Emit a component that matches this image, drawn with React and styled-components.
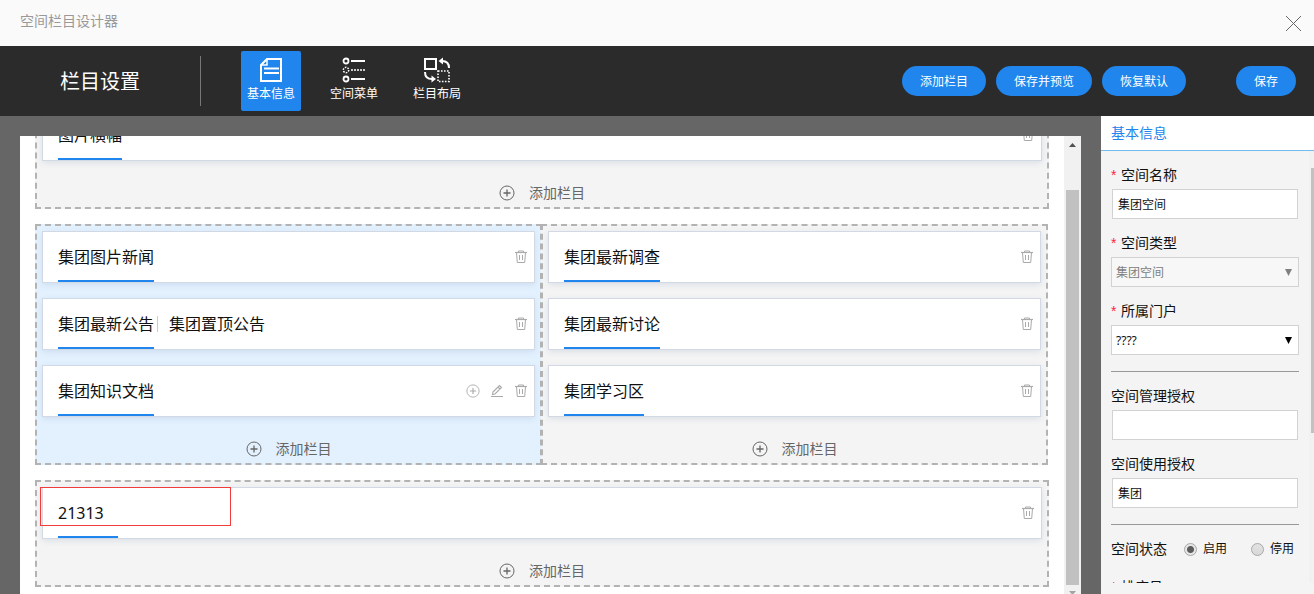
import React, { useState } from 'react';
import styled, { createGlobalStyle, css } from 'styled-components';

const GlobalStyle = createGlobalStyle`
  *, *::before, *::after {
    box-sizing: border-box;
  }
  body {
    margin: 0;
    overflow: hidden;
    color: #111;
    font-family: "Noto Sans", "Noto Sans CJK SC", sans-serif;
    font-size: 14px;
  }
  button, input, select {
    font-family: inherit;
  }
`;

const Page = styled.div`
  display: flex;
  flex-direction: column;
  height: 100vh;
`;

const TitleBar = styled.div`
  display: flex;
  flex: none;
  align-items: center;
  justify-content: space-between;
  height: 46px;
  padding: 0 12px 0 20px;
  background: #fafafa;
  color: #999;
  line-height: 20px;
`;

const TitleText = styled.span`
  padding-bottom: 4px;
`;

const IconButton = styled.button`
  display: flex;
  padding: 0;
  border: 0;
  background: none;
  color: inherit;
  cursor: pointer;
`;

const Header = styled.header`
  display: flex;
  flex: none;
  align-items: center;
  height: 70px;
  padding: 0 18px 0 60px;
  background: #2b2b2b;
  color: #fff;
`;

const HeaderTitle = styled.h1`
  margin: 0;
  padding: 2px 60px 0 0;
  font-size: 20px;
  font-weight: 400;
  line-height: 48px;
  border-right: 1px solid #777;
`;

const Nav = styled.nav`
  display: flex;
  flex: 1;
  gap: 23px;
  margin-left: 40px;
`;

const NavButton = styled.button`
  display: flex;
  flex-direction: column;
  align-items: center;
  width: 60px;
  height: 60px;
  padding: 6px 0 0;
  border: 0;
  border-radius: 2px;
  background: none;
  color: #fff;
  font-size: 12px;
  line-height: 22px;
  white-space: nowrap;
  cursor: pointer;
  ${props => props.$active && css`
    background: #2085ec;
  `}
`;

const Actions = styled.div`
  display: flex;
  gap: 10px;
`;

const ActionButton = styled.button`
  height: 30px;
  padding: 0 18px;
  border: 0;
  border-radius: 15px;
  background: #2085ec;
  color: #fff;
  font-size: 12px;
  cursor: pointer;
`;

const SaveButton = styled(ActionButton)`
  margin-left: 50px;
`;

const Body = styled.div`
  display: flex;
  flex: 1;
  min-height: 0;
  background: #666;
`;

const Canvas = styled.main`
  display: flex;
  flex: 1;
  min-width: 0;
  margin: 20px 20px 0;
  background: #fff;
`;

const Viewport = styled.div`
  flex: 1;
  overflow: hidden;
`;

const Sections = styled.div`
  display: flex;
  flex-direction: column;
  gap: 15px;
  margin-top: -34px;
  padding: 0 15px;
`;

const Columns = styled.div`
  display: flex;
  padding-right: 1px;
  > :last-child {
    margin-left: -1px;
  }
`;

const Section = styled.section`
  position: relative;
  flex: 1;
  padding: 5px 5px 0;
  border: 2px dashed #b3b3b3;
  background: ${props => (props.$active ? '#e3f1fe' : '#f4f4f4')};
`;

const Card = styled.div`
  display: flex;
  align-items: center;
  height: 52px;
  margin-bottom: 15px;
  padding: 0 6px 0 15px;
  border: 1px solid #d3d8e5;
  background: #fff;
  box-shadow: 0 2px 6px rgba(60, 90, 140, 0.12);
`;

const CardTitles = styled.div`
  display: flex;
  flex: 1;
`;

const CardTitle = styled.div`
  display: flex;
  align-items: center;
  min-width: 60px;
  height: 50px;
  padding-top: 2px;
  border-bottom: 2px solid ${props => (props.$active ? '#2085ec' : 'transparent')};
  font-size: 16px;
  line-height: 16px;
  &:not(:first-child)::before {
    content: "";
    width: 1px;
    height: 16px;
    margin: 0 11px 0 3px;
    background: #ccc;
  }
`;

const CardTools = styled.div`
  display: flex;
  gap: 10px;
  color: #aaa;
`;

const AddButton = styled.button`
  display: flex;
  align-items: center;
  justify-content: center;
  gap: 14px;
  width: 100%;
  height: 31px;
  padding: 2px 0 0;
  border: 0;
  background: none;
  color: #666;
  font-size: 14px;
  line-height: 20px;
  cursor: pointer;
`;

const Marker = styled.div`
  position: absolute;
  top: 5px;
  left: 3px;
  width: 191px;
  height: 39px;
  border: 1px solid #f23c3c;
`;

const ScrollBar = styled.div`
  display: flex;
  flex-direction: column;
  width: 17px;
  background: #f1f1f1;
`;

const ScrollArrow = styled.div`
  display: flex;
  flex: none;
  justify-content: center;
  height: ${props => (props.$down ? 9 : 17)}px;
  padding-top: ${props => (props.$down ? 6 : 7)}px;
  color: ${props => (props.$down ? '#a3a3a3' : '#505050')};
  overflow: hidden;
`;

const ScrollThumb = styled.div`
  flex: 1;
  margin: 37px 2px 0;
  background: #c1c1c1;
`;

const Sidebar = styled.aside`
  display: flex;
  flex: none;
  flex-direction: column;
  width: 213px;
  padding-bottom: 11px;
  background: #f4f4f4;
`;

const SidebarTitle = styled.h2`
  flex: none;
  margin: 0;
  padding-left: 10px;
  border-bottom: 1px solid #70bbf2;
  background: #fff;
  color: #2085ec;
  font-size: 14px;
  font-weight: 400;
  line-height: 34px;
`;

const SidebarBody = styled.div`
  display: flex;
  flex: 1;
  min-height: 0;
  overflow: hidden;
`;

const SidebarScroll = styled.div`
  width: 5px;
  padding: 17px 0 0 2px;
  background: #f1f1f1;
`;

const SidebarThumb = styled.div`
  height: 265px;
  background: #c1c1c1;
`;

const Form = styled.form`
  flex: 1;
  min-width: 0;
  padding: 14px 10px 0;
`;

const Field = styled.div`
  margin-bottom: 14px;
`;

const Label = styled.label`
  display: flex;
  margin-bottom: 4px;
  line-height: 20px;
`;

const Required = styled.span`
  width: 10px;
  color: #ff1f3d;
  font-family: "Liberation Sans", sans-serif;
`;

const TextInput = styled.input`
  display: block;
  width: calc(100% - 2px);
  height: 30px;
  margin: 0 1px;
  padding: 0 5px;
  border: 1px solid #d2d2d2;
  background: #fff;
  color: #111;
  font-size: 12px;
`;

const SelectBox = styled.div`
  position: relative;
  svg {
    position: absolute;
    top: 12px;
    right: 7px;
    color: ${props => (props.$disabled ? '#808080' : '#000')};
    pointer-events: none;
  }
`;

const Select = styled.select`
  appearance: none;
  display: block;
  width: 100%;
  height: 30px;
  padding: 0 4px;
  border: 1px solid #d2d2d2;
  border-radius: 0;
  background: #fff;
  color: #111;
  font-size: 12px;
  &:disabled {
    background: #f7f7f7;
    color: #808080;
    opacity: 1;
  }
`;

const Divider = styled.hr`
  height: 1px;
  margin: 16px 0 14px;
  border: 0;
  background: #999;
`;

const RadioRow = styled.div`
  display: flex;
  align-items: center;
  margin-bottom: 18px;
  padding-right: 5px;
  line-height: 20px;
`;

const RadioGroupLabel = styled.span`
  flex: 1;
`;

const RadioLabel = styled.label`
  display: flex;
  align-items: center;
  gap: 6px;
  font-size: 12px;
  & + & {
    margin-left: 24px;
  }
`;

const Radio = styled.input`
  appearance: none;
  width: 13px;
  height: 13px;
  margin: 0;
  border: 1px solid #a8a8a8;
  border-radius: 50%;
  background: linear-gradient(#e2e2e2, #d8d8d8);
  &:checked {
    background: radial-gradient(circle, #5c5c5c 3px, #e6e6e6 4px);
  }
`;

const CloseIcon = () => (
  <svg width="17" height="17" viewBox="0 0 17 17" fill="none" stroke="#666">
    <path d="M1 1l15 15M16 1L1 16" />
  </svg>
);

const InfoIcon = () => (
  <svg width="26" height="26" viewBox="0 0 26 26" fill="none" stroke="currentColor" strokeWidth="2">
    <path d="M9 2h14v22H3V8z" />
    <path d="M9 2v6H3" strokeWidth="1.5" />
    <path d="M6 11.5h15M6 16h15" />
  </svg>
);

const MenuIcon = () => (
  <svg width="26" height="26" viewBox="0 0 26 26" fill="none" stroke="currentColor">
    <circle cx="5" cy="4" r="2.5" strokeWidth="1.8" />
    <circle cx="5" cy="13" r="2.7" strokeWidth="1.5" strokeDasharray="1.6 1.2" />
    <circle cx="5" cy="22" r="2.5" strokeWidth="1.8" />
    <path d="M10 4h14M10 22h14" strokeWidth="2" />
    <path d="M10 13h14" strokeWidth="1.4" strokeDasharray="2 1" />
  </svg>
);

const LayoutIcon = () => (
  <svg width="26" height="26" viewBox="0 0 26 26" fill="none" stroke="currentColor">
    <path d="M1 2h11v10H1z" strokeWidth="2" />
    <path d="M14 14h11v10.5H14z" strokeWidth="1.6" strokeDasharray="1.6 1.4" />
    <path d="M18 4q7 0 7 7" strokeWidth="2" />
    <path d="M19 .5v7L14.5 4z" fill="currentColor" stroke="none" />
    <path d="M1 15q0 7 7 7" strokeWidth="2" />
    <path d="M7.500 18.500v7L12 22z" fill="currentColor" stroke="none" />
  </svg>
);

const PlusIcon = ({ size }) => (
  <svg width={size} height={size} viewBox="0 0 16 16" fill="none" stroke="currentColor">
    <circle cx="8" cy="8" r="7" />
    <path d="M8 4.5v7M4.5 8h7" strokeWidth="1.3" />
  </svg>
);

const EditIcon = () => (
  <svg width="14" height="14" viewBox="0 0 14 14" fill="none" stroke="currentColor" strokeWidth="1.1">
    <path d="M3 8l6.500-6.500 2 2L5 10l-2.500.5zM8 3l2 2M1 12.500h12" />
  </svg>
);

const TrashIcon = () => (
  <svg width="14" height="14" viewBox="0 0 14 14" fill="none" stroke="currentColor">
    <path d="M1 2.5h12" strokeWidth="1.2" />
    <path d="M4.5 2.5V1h5v1.500M2.500 2.500l.8 10h7.400l.8-10M5.500 5v5M8.500 5v5" />
  </svg>
);

const Triangle = ({ up, width = 7, height = 4 }) => (
  <svg width={width} height={height} viewBox="0 0 8 8" preserveAspectRatio="none" fill="currentColor">
    <path d={up ? 'M0 8h8L4 0z' : 'M0 0h8L4 8z'} />
  </svg>
);

const NAV_ITEMS = [
  { id: 'info', text: '基本信息', Icon: InfoIcon },
  { id: 'menu', text: '空间菜单', Icon: MenuIcon },
  { id: 'layout', text: '栏目布局', Icon: LayoutIcon }
];

function ColumnCard({ titles, editable }) {
  return (
    <Card>
      <CardTitles>
        {titles.map((title, index) => (
          <CardTitle key={title} $active={index === 0}>{title}</CardTitle>
        ))}
      </CardTitles>
      <CardTools>
        {editable && (
          <>
            <IconButton type="button" aria-label="添加"><PlusIcon size={14} /></IconButton>
            <IconButton type="button" aria-label="编辑"><EditIcon /></IconButton>
          </>
        )}
        <IconButton type="button" aria-label="删除"><TrashIcon /></IconButton>
      </CardTools>
    </Card>
  );
}

function ColumnSection({ cards, active, children }) {
  return (
    <Section $active={active}>
      {cards.map(card => (
        <ColumnCard key={card.titles[0]} {...card} />
      ))}
      <AddButton type="button">
        <PlusIcon size={16} />
        添加栏目
      </AddButton>
      {children}
    </Section>
  );
}

function App() {
  const [tab, setTab] = useState('info');
  const [status, setStatus] = useState('on');

  return (
    <Page>
      <GlobalStyle />
      <TitleBar>
        <TitleText>空间栏目设计器</TitleText>
        <IconButton type="button" aria-label="关闭"><CloseIcon /></IconButton>
      </TitleBar>
      <Header>
        <HeaderTitle>栏目设置</HeaderTitle>
        <Nav>
          {NAV_ITEMS.map(({ id, text, Icon }) => (
            <NavButton key={id} type="button" $active={id === tab} onClick={() => setTab(id)}>
              <Icon />
              {text}
            </NavButton>
          ))}
        </Nav>
        <Actions>
          <ActionButton type="button">添加栏目</ActionButton>
          <ActionButton type="button">保存并预览</ActionButton>
          <ActionButton type="button">恢复默认</ActionButton>
        </Actions>
        <SaveButton type="button">保存</SaveButton>
      </Header>
      <Body>
        <Canvas>
          <Viewport>
            <Sections>
              <ColumnSection cards={[{ titles: ['图片横幅'] }]} />
              <Columns>
                <ColumnSection
                  active
                  cards={[
                    { titles: ['集团图片新闻'] },
                    { titles: ['集团最新公告', '集团置顶公告'] },
                    { titles: ['集团知识文档'], editable: true }
                  ]}
                />
                <ColumnSection
                  cards={[
                    { titles: ['集团最新调查'] },
                    { titles: ['集团最新讨论'] },
                    { titles: ['集团学习区'] }
                  ]}
                />
              </Columns>
              <ColumnSection cards={[{ titles: ['21313'] }]}>
                <Marker />
              </ColumnSection>
            </Sections>
          </Viewport>
          <ScrollBar>
            <ScrollArrow><Triangle up /></ScrollArrow>
            <ScrollThumb />
            <ScrollArrow $down><Triangle /></ScrollArrow>
          </ScrollBar>
        </Canvas>
        <Sidebar>
          <SidebarTitle>基本信息</SidebarTitle>
          <SidebarBody>
            <Form>
              <Field>
                <Label htmlFor="name"><Required>*</Required>空间名称</Label>
                <TextInput id="name" defaultValue="集团空间" />
              </Field>
              <Field>
                <Label htmlFor="type"><Required>*</Required>空间类型</Label>
                <SelectBox $disabled>
                  <Select id="type" disabled>
                    <option>集团空间</option>
                  </Select>
                  <Triangle width={7} height={7} />
                </SelectBox>
              </Field>
              <Field>
                <Label htmlFor="portal"><Required>*</Required>所属门户</Label>
                <SelectBox>
                  <Select id="portal">
                    <option>????</option>
                  </Select>
                  <Triangle width={7} height={7} />
                </SelectBox>
              </Field>
              <Divider />
              <Field>
                <Label htmlFor="manage">空间管理授权</Label>
                <TextInput id="manage" />
              </Field>
              <Field>
                <Label htmlFor="use">空间使用授权</Label>
                <TextInput id="use" defaultValue="集团" />
              </Field>
              <Divider />
              <RadioRow>
                <RadioGroupLabel>空间状态</RadioGroupLabel>
                <RadioLabel>
                  <Radio type="radio" name="status" checked={status === 'on'} onChange={() => setStatus('on')} />
                  启用
                </RadioLabel>
                <RadioLabel>
                  <Radio type="radio" name="status" checked={status === 'off'} onChange={() => setStatus('off')} />
                  停用
                </RadioLabel>
              </RadioRow>
              <Field>
                <Label htmlFor="order"><Required>*</Required>排序号</Label>
                <TextInput id="order" />
              </Field>
            </Form>
            <SidebarScroll>
              <SidebarThumb />
            </SidebarScroll>
          </SidebarBody>
        </Sidebar>
      </Body>
    </Page>
  );
}

export default App;
